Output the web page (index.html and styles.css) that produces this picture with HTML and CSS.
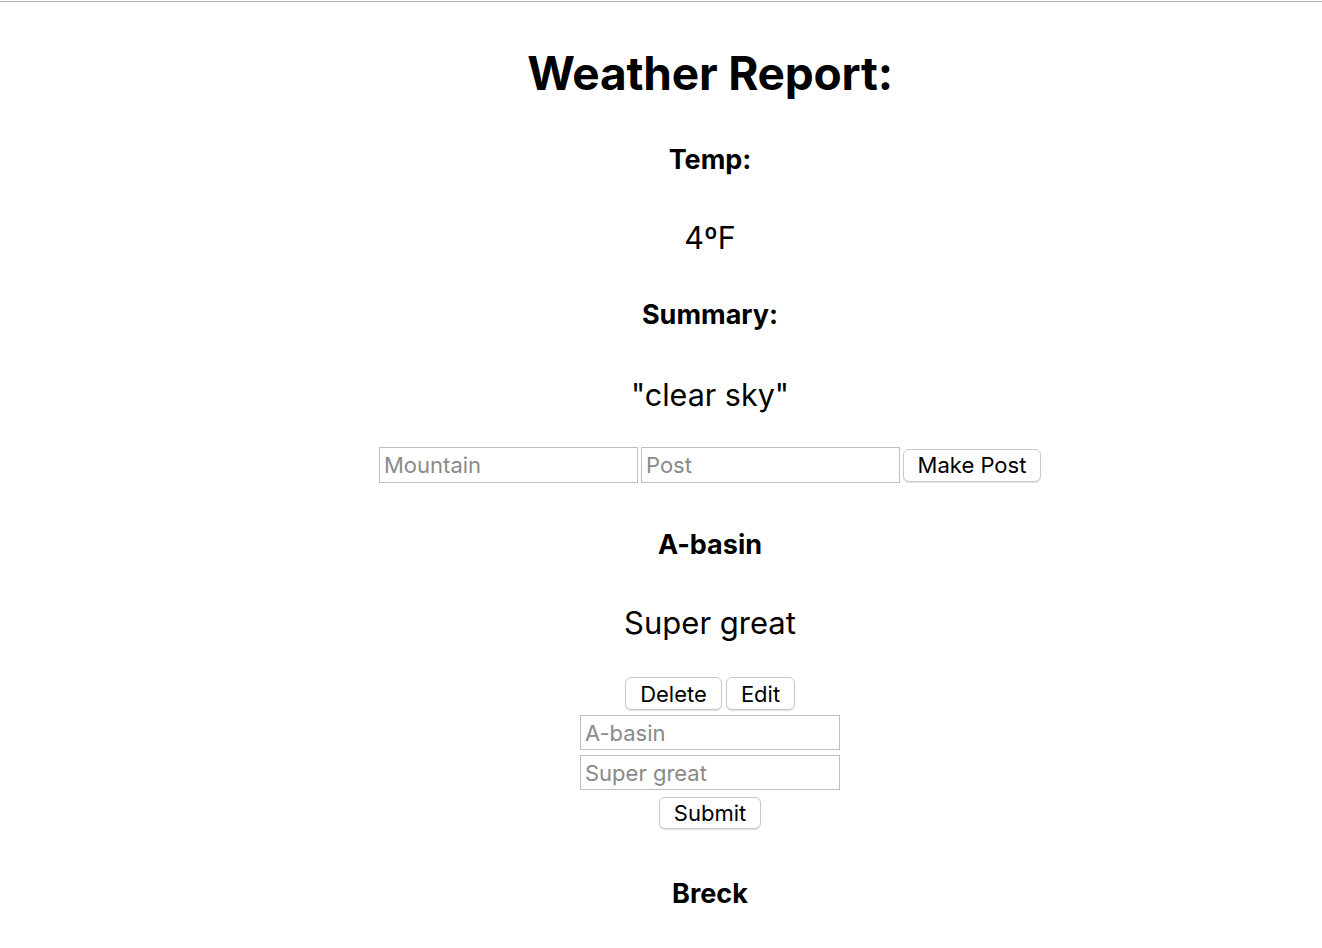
FILE: index.html
```html
<!DOCTYPE html>
<html lang="en">
<head>
<meta charset="utf-8">
<title>Weather Report</title>
<link rel="stylesheet" href="styles.css">
</head>
<body>
<div class="topline"></div>
<main class="page">
  <h1 class="title">Weather Report:</h1>
  <h3 class="label">Temp:</h3>
  <p class="value">4ºF</p>
  <h3 class="label">Summary:</h3>
  <p class="value value-quote">"clear sky"</p>
  <form class="post-form">
    <input class="field" type="text" placeholder="Mountain">
    <input class="field" type="text" placeholder="Post">
    <button class="btn btn-make" type="button">Make Post</button>
  </form>
  <section class="post">
    <h3 class="label">A-basin</h3>
    <p class="value value-post">Super great</p>
    <div class="post-actions">
      <button class="btn btn-delete" type="button">Delete</button>
      <button class="btn btn-edit" type="button">Edit</button>
    </div>
    <div class="edit-form">
      <input class="field field-edit" type="text" placeholder="A-basin">
      <input class="field field-edit" type="text" placeholder="Super great">
      <button class="btn btn-submit" type="button">Submit</button>
    </div>
  </section>
  <section class="post post-next">
    <h3 class="label">Breck</h3>
  </section>
</main>
</body>
</html>
```
FILE: styles.css
```css
html, body {
  margin: 0;
  padding: 0;
  background: #ffffff;
}

body {
  font-family: Inter, "Noto Sans", "Liberation Sans", sans-serif;
  color: #000000;
  overflow: hidden;
}

.topline {
  height: 1px;
  margin-top: 1px;
  background: #b3b3b3;
}

.page {
  display: flex;
  flex-direction: column;
  align-items: center;
  margin-left: 98px;
}

.title {
  margin: 43px 0 0 0;
  font-size: 46px;
  line-height: 56px;
  font-weight: 700;
  letter-spacing: -0.2px;
}

.label {
  margin: 43px 0 0 0;
  font-size: 27px;
  line-height: 32px;
  font-weight: 700;
}

.value {
  margin: 44px 0 0 0;
  font-size: 30.5px;
  line-height: 36px;
  font-weight: 400;
}

.value-quote {
  margin-top: 46px;
}

.value-post {
  font-size: 31px;
}

.post-form {
  display: flex;
  align-items: center;
  gap: 3px;
  margin-top: 34px;
  height: 36px;
}

.field {
  box-sizing: border-box;
  width: 259px;
  height: 36px;
  margin: 0;
  padding: 0 4px;
  border: 1px solid #bfbfbf;
  border-radius: 0;
  font-family: inherit;
  font-size: 22px;
  color: #000;
  background: #fff;
  outline: none;
}

.field::placeholder {
  color: #8a8a8a;
}

.btn {
  box-sizing: border-box;
  height: 33px;
  margin: 0;
  padding: 0 10px;
  border: 1px solid #c9c9c9;
  border-radius: 6px;
  background: #ffffff;
  box-shadow: 0 1px 1px rgba(0, 0, 0, 0.12);
  font-family: inherit;
  font-size: 22px;
  color: #000;
}

.btn-make {
  width: 138px;
}

.post {
  display: flex;
  flex-direction: column;
  align-items: center;
}

.post .label {
  margin-top: 46px;
}

.post-next .label {
  margin-top: 49px;
}

.post-actions {
  display: flex;
  gap: 4px;
  margin-top: 36px;
}

.btn-delete {
  width: 97px;
}

.btn-edit {
  width: 69px;
}

.edit-form {
  display: flex;
  flex-direction: column;
  align-items: center;
  margin-top: 5px;
}

.field-edit {
  width: 260px;
  height: 35px;
  margin-bottom: 5px;
}

.btn-submit {
  width: 102px;
  height: 32px;
  margin-top: 2px;
}
```
